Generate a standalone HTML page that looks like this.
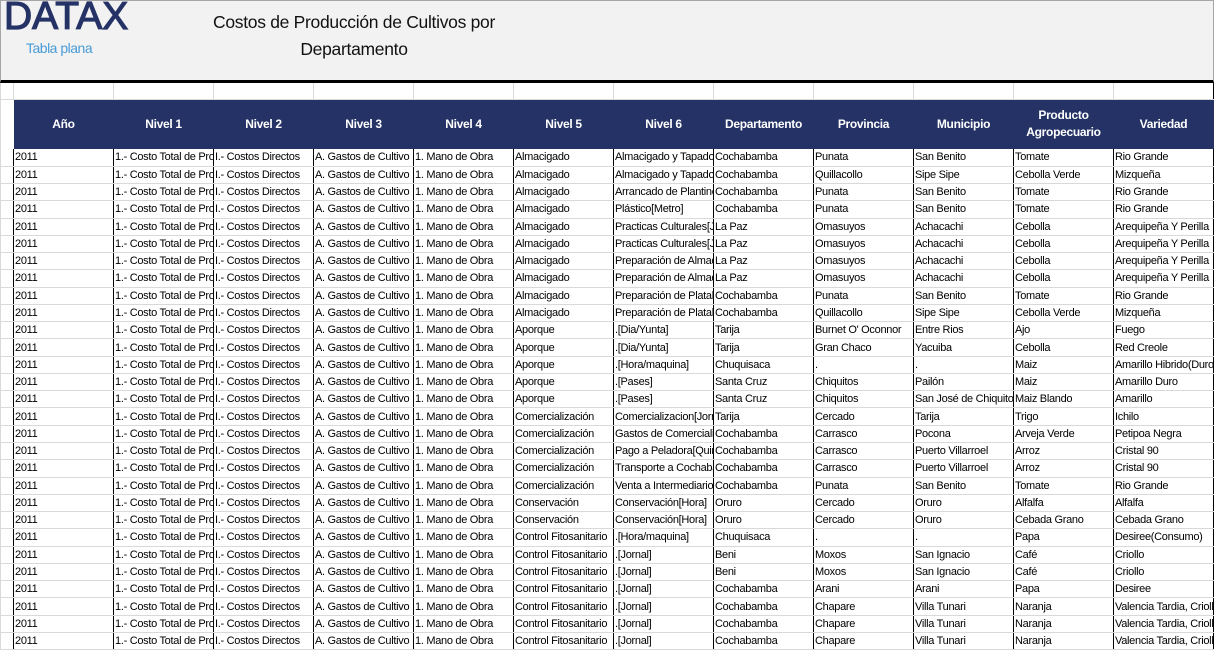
<!DOCTYPE html>
<html><head><meta charset="utf-8"><style>
*{margin:0;padding:0;box-sizing:border-box}
body{width:1214px;height:651px;overflow:hidden;background:#fff;font-family:"Liberation Sans",sans-serif;position:relative}
#top{position:absolute;left:0;top:0;width:1214px;height:83px;background:#f2f2f2;border:1px solid #a6a6a6;border-bottom:3px solid #000}
#logo{position:absolute;left:3px;top:-6px;font-size:39px;font-weight:normal;color:#243266;letter-spacing:0px;-webkit-text-stroke:1.2px #243266}
#sub{position:absolute;left:25px;top:39px;font-size:14px;color:#4a9bd6;letter-spacing:-0.5px}
#title{position:absolute;left:198px;top:8px;width:310px;text-align:center;font-size:17.5px;line-height:27px;color:#111;letter-spacing:-0.3px}
#grid{position:absolute;left:0;top:83px;width:1214px}
table{border-collapse:collapse;table-layout:fixed;width:1213px}
td{overflow:hidden;white-space:nowrap;font-size:11px;letter-spacing:-0.3px;color:#000;padding:0 1px;height:17.27px;line-height:16px;border-bottom:1px solid #d9d9d9;border-left:1px solid #000}
td:first-child{border-left:1px solid #d9d9d9}
tr.e td{height:16px;border-left:1px solid #d9d9d9}
tr.h td{height:50px;background:#243266;color:#fff;font-weight:bold;text-align:center;white-space:normal;font-size:12px;line-height:17px;border:none}
tr.h td:first-child{background:#fff;border-left:1px solid #d9d9d9}
td:last-child{border-right:1px solid #000}
</style></head><body>
<div id="top"><div id="logo">DATAX</div><div id="sub">Tabla plana</div><div id="title">Costos de Producción de Cultivos por Departamento</div></div>
<div id="grid"><table>
<colgroup><col style="width:13px"><col style="width:100px"><col style="width:100px"><col style="width:100px"><col style="width:100px"><col style="width:100px"><col style="width:100px"><col style="width:100px"><col style="width:100px"><col style="width:100px"><col style="width:100px"><col style="width:100px"><col style="width:100px"></colgroup>
<tr class="e"><td></td><td></td><td></td><td></td><td></td><td></td><td></td><td></td><td></td><td></td><td></td><td></td><td></td></tr>
<tr class="h"><td></td><td>Año</td><td>Nivel 1</td><td>Nivel 2</td><td>Nivel 3</td><td>Nivel 4</td><td>Nivel 5</td><td>Nivel 6</td><td>Departamento</td><td>Provincia</td><td>Municipio</td><td>Producto Agropecuario</td><td>Variedad</td></tr>
<tr><td></td><td>2011</td><td>1.- Costo Total de Pro</td><td>I.- Costos Directos</td><td>A. Gastos de Cultivo</td><td>1. Mano de Obra</td><td>Almacigado</td><td>Almacigado y Tapado</td><td>Cochabamba</td><td>Punata</td><td>San Benito</td><td>Tomate</td><td>Rio Grande</td></tr>
<tr><td></td><td>2011</td><td>1.- Costo Total de Pro</td><td>I.- Costos Directos</td><td>A. Gastos de Cultivo</td><td>1. Mano de Obra</td><td>Almacigado</td><td>Almacigado y Tapado</td><td>Cochabamba</td><td>Quillacollo</td><td>Sipe Sipe</td><td>Cebolla Verde</td><td>Mizqueña</td></tr>
<tr><td></td><td>2011</td><td>1.- Costo Total de Pro</td><td>I.- Costos Directos</td><td>A. Gastos de Cultivo</td><td>1. Mano de Obra</td><td>Almacigado</td><td>Arrancado de Plantines</td><td>Cochabamba</td><td>Punata</td><td>San Benito</td><td>Tomate</td><td>Rio Grande</td></tr>
<tr><td></td><td>2011</td><td>1.- Costo Total de Pro</td><td>I.- Costos Directos</td><td>A. Gastos de Cultivo</td><td>1. Mano de Obra</td><td>Almacigado</td><td>Plástico[Metro]</td><td>Cochabamba</td><td>Punata</td><td>San Benito</td><td>Tomate</td><td>Rio Grande</td></tr>
<tr><td></td><td>2011</td><td>1.- Costo Total de Pro</td><td>I.- Costos Directos</td><td>A. Gastos de Cultivo</td><td>1. Mano de Obra</td><td>Almacigado</td><td>Practicas Culturales[Jornal]</td><td>La Paz</td><td>Omasuyos</td><td>Achacachi</td><td>Cebolla</td><td>Arequipeña Y Perilla</td></tr>
<tr><td></td><td>2011</td><td>1.- Costo Total de Pro</td><td>I.- Costos Directos</td><td>A. Gastos de Cultivo</td><td>1. Mano de Obra</td><td>Almacigado</td><td>Practicas Culturales[Jornal]</td><td>La Paz</td><td>Omasuyos</td><td>Achacachi</td><td>Cebolla</td><td>Arequipeña Y Perilla</td></tr>
<tr><td></td><td>2011</td><td>1.- Costo Total de Pro</td><td>I.- Costos Directos</td><td>A. Gastos de Cultivo</td><td>1. Mano de Obra</td><td>Almacigado</td><td>Preparación de Almacigo</td><td>La Paz</td><td>Omasuyos</td><td>Achacachi</td><td>Cebolla</td><td>Arequipeña Y Perilla</td></tr>
<tr><td></td><td>2011</td><td>1.- Costo Total de Pro</td><td>I.- Costos Directos</td><td>A. Gastos de Cultivo</td><td>1. Mano de Obra</td><td>Almacigado</td><td>Preparación de Almacigo</td><td>La Paz</td><td>Omasuyos</td><td>Achacachi</td><td>Cebolla</td><td>Arequipeña Y Perilla</td></tr>
<tr><td></td><td>2011</td><td>1.- Costo Total de Pro</td><td>I.- Costos Directos</td><td>A. Gastos de Cultivo</td><td>1. Mano de Obra</td><td>Almacigado</td><td>Preparación de Platabandas</td><td>Cochabamba</td><td>Punata</td><td>San Benito</td><td>Tomate</td><td>Rio Grande</td></tr>
<tr><td></td><td>2011</td><td>1.- Costo Total de Pro</td><td>I.- Costos Directos</td><td>A. Gastos de Cultivo</td><td>1. Mano de Obra</td><td>Almacigado</td><td>Preparación de Platabandas</td><td>Cochabamba</td><td>Quillacollo</td><td>Sipe Sipe</td><td>Cebolla Verde</td><td>Mizqueña</td></tr>
<tr><td></td><td>2011</td><td>1.- Costo Total de Pro</td><td>I.- Costos Directos</td><td>A. Gastos de Cultivo</td><td>1. Mano de Obra</td><td>Aporque</td><td>.[Dia/Yunta]</td><td>Tarija</td><td>Burnet O' Oconnor</td><td>Entre Rios</td><td>Ajo</td><td>Fuego</td></tr>
<tr><td></td><td>2011</td><td>1.- Costo Total de Pro</td><td>I.- Costos Directos</td><td>A. Gastos de Cultivo</td><td>1. Mano de Obra</td><td>Aporque</td><td>.[Dia/Yunta]</td><td>Tarija</td><td>Gran Chaco</td><td>Yacuiba</td><td>Cebolla</td><td>Red Creole</td></tr>
<tr><td></td><td>2011</td><td>1.- Costo Total de Pro</td><td>I.- Costos Directos</td><td>A. Gastos de Cultivo</td><td>1. Mano de Obra</td><td>Aporque</td><td>.[Hora/maquina]</td><td>Chuquisaca</td><td>.</td><td>.</td><td>Maiz</td><td>Amarillo Hibrido(Duro)</td></tr>
<tr><td></td><td>2011</td><td>1.- Costo Total de Pro</td><td>I.- Costos Directos</td><td>A. Gastos de Cultivo</td><td>1. Mano de Obra</td><td>Aporque</td><td>.[Pases]</td><td>Santa Cruz</td><td>Chiquitos</td><td>Pailón</td><td>Maiz</td><td>Amarillo Duro</td></tr>
<tr><td></td><td>2011</td><td>1.- Costo Total de Pro</td><td>I.- Costos Directos</td><td>A. Gastos de Cultivo</td><td>1. Mano de Obra</td><td>Aporque</td><td>.[Pases]</td><td>Santa Cruz</td><td>Chiquitos</td><td>San José de Chiquitos</td><td>Maiz Blando</td><td>Amarillo</td></tr>
<tr><td></td><td>2011</td><td>1.- Costo Total de Pro</td><td>I.- Costos Directos</td><td>A. Gastos de Cultivo</td><td>1. Mano de Obra</td><td>Comercialización</td><td>Comercializacion[Jornal]</td><td>Tarija</td><td>Cercado</td><td>Tarija</td><td>Trigo</td><td>Ichilo</td></tr>
<tr><td></td><td>2011</td><td>1.- Costo Total de Pro</td><td>I.- Costos Directos</td><td>A. Gastos de Cultivo</td><td>1. Mano de Obra</td><td>Comercialización</td><td>Gastos de Comercialización</td><td>Cochabamba</td><td>Carrasco</td><td>Pocona</td><td>Arveja Verde</td><td>Petipoa Negra</td></tr>
<tr><td></td><td>2011</td><td>1.- Costo Total de Pro</td><td>I.- Costos Directos</td><td>A. Gastos de Cultivo</td><td>1. Mano de Obra</td><td>Comercialización</td><td>Pago a Peladora[Quintal]</td><td>Cochabamba</td><td>Carrasco</td><td>Puerto Villarroel</td><td>Arroz</td><td>Cristal 90</td></tr>
<tr><td></td><td>2011</td><td>1.- Costo Total de Pro</td><td>I.- Costos Directos</td><td>A. Gastos de Cultivo</td><td>1. Mano de Obra</td><td>Comercialización</td><td>Transporte a Cochabamba</td><td>Cochabamba</td><td>Carrasco</td><td>Puerto Villarroel</td><td>Arroz</td><td>Cristal 90</td></tr>
<tr><td></td><td>2011</td><td>1.- Costo Total de Pro</td><td>I.- Costos Directos</td><td>A. Gastos de Cultivo</td><td>1. Mano de Obra</td><td>Comercialización</td><td>Venta a Intermediario</td><td>Cochabamba</td><td>Punata</td><td>San Benito</td><td>Tomate</td><td>Rio Grande</td></tr>
<tr><td></td><td>2011</td><td>1.- Costo Total de Pro</td><td>I.- Costos Directos</td><td>A. Gastos de Cultivo</td><td>1. Mano de Obra</td><td>Conservación</td><td>Conservación[Hora]</td><td>Oruro</td><td>Cercado</td><td>Oruro</td><td>Alfalfa</td><td>Alfalfa</td></tr>
<tr><td></td><td>2011</td><td>1.- Costo Total de Pro</td><td>I.- Costos Directos</td><td>A. Gastos de Cultivo</td><td>1. Mano de Obra</td><td>Conservación</td><td>Conservación[Hora]</td><td>Oruro</td><td>Cercado</td><td>Oruro</td><td>Cebada Grano</td><td>Cebada Grano</td></tr>
<tr><td></td><td>2011</td><td>1.- Costo Total de Pro</td><td>I.- Costos Directos</td><td>A. Gastos de Cultivo</td><td>1. Mano de Obra</td><td>Control Fitosanitario</td><td>.[Hora/maquina]</td><td>Chuquisaca</td><td>.</td><td>.</td><td>Papa</td><td>Desiree(Consumo)</td></tr>
<tr><td></td><td>2011</td><td>1.- Costo Total de Pro</td><td>I.- Costos Directos</td><td>A. Gastos de Cultivo</td><td>1. Mano de Obra</td><td>Control Fitosanitario</td><td>.[Jornal]</td><td>Beni</td><td>Moxos</td><td>San Ignacio</td><td>Café</td><td>Criollo</td></tr>
<tr><td></td><td>2011</td><td>1.- Costo Total de Pro</td><td>I.- Costos Directos</td><td>A. Gastos de Cultivo</td><td>1. Mano de Obra</td><td>Control Fitosanitario</td><td>.[Jornal]</td><td>Beni</td><td>Moxos</td><td>San Ignacio</td><td>Café</td><td>Criollo</td></tr>
<tr><td></td><td>2011</td><td>1.- Costo Total de Pro</td><td>I.- Costos Directos</td><td>A. Gastos de Cultivo</td><td>1. Mano de Obra</td><td>Control Fitosanitario</td><td>.[Jornal]</td><td>Cochabamba</td><td>Arani</td><td>Arani</td><td>Papa</td><td>Desiree</td></tr>
<tr><td></td><td>2011</td><td>1.- Costo Total de Pro</td><td>I.- Costos Directos</td><td>A. Gastos de Cultivo</td><td>1. Mano de Obra</td><td>Control Fitosanitario</td><td>.[Jornal]</td><td>Cochabamba</td><td>Chapare</td><td>Villa Tunari</td><td>Naranja</td><td>Valencia Tardia, Criolla</td></tr>
<tr><td></td><td>2011</td><td>1.- Costo Total de Pro</td><td>I.- Costos Directos</td><td>A. Gastos de Cultivo</td><td>1. Mano de Obra</td><td>Control Fitosanitario</td><td>.[Jornal]</td><td>Cochabamba</td><td>Chapare</td><td>Villa Tunari</td><td>Naranja</td><td>Valencia Tardia, Criolla</td></tr>
<tr><td></td><td>2011</td><td>1.- Costo Total de Pro</td><td>I.- Costos Directos</td><td>A. Gastos de Cultivo</td><td>1. Mano de Obra</td><td>Control Fitosanitario</td><td>.[Jornal]</td><td>Cochabamba</td><td>Chapare</td><td>Villa Tunari</td><td>Naranja</td><td>Valencia Tardia, Criolla</td></tr>
</table></div>
</body></html>
